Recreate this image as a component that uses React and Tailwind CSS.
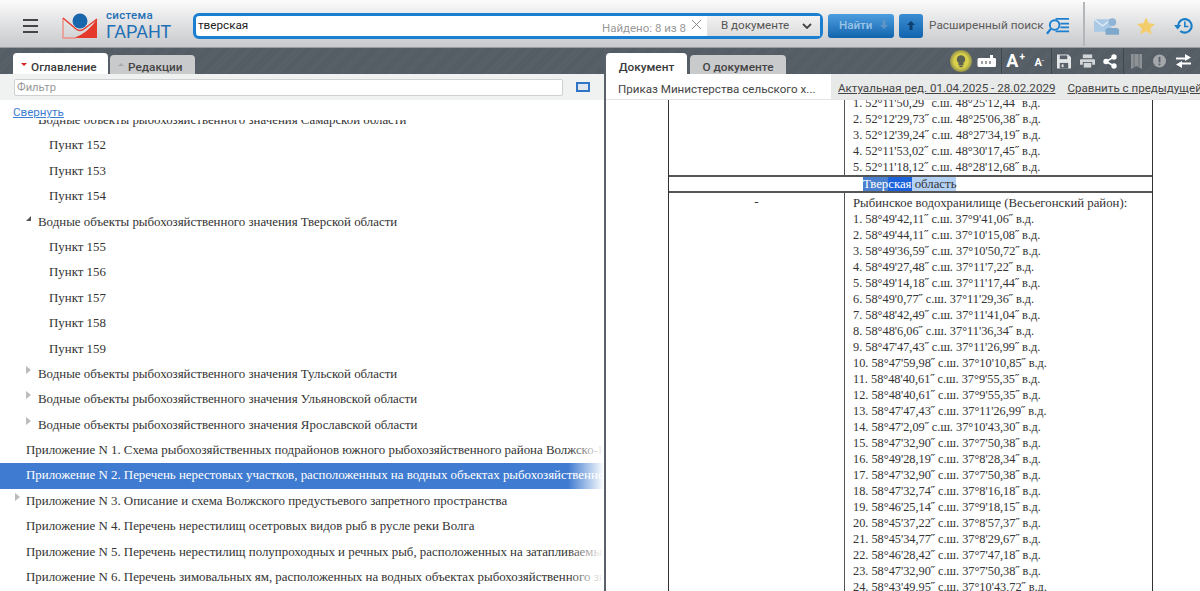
const sans = "font-['Roboto',sans-serif]"
const serif = "font-['Liberation_Serif',serif]"
const hatch = "bg-[#59626a] bg-[repeating-linear-gradient(135deg,#59626a_0px,#59626a_1px,#525a62_1px,#525a62_2px)]"

const treeRows = [
  { t: "Водные объекты рыбохозяйственного значения Самарской области", lvl: 1 },
  { t: "Пункт 152", lvl: 2 },
  { t: "Пункт 153", lvl: 2 },
  { t: "Пункт 154", lvl: 2 },
  { t: "Водные объекты рыбохозяйственного значения Тверской области", lvl: 1, arrow: "open" },
  { t: "Пункт 155", lvl: 2 },
  { t: "Пункт 156", lvl: 2 },
  { t: "Пункт 157", lvl: 2 },
  { t: "Пункт 158", lvl: 2 },
  { t: "Пункт 159", lvl: 2 },
  { t: "Водные объекты рыбохозяйственного значения Тульской области", lvl: 1, arrow: "closed" },
  { t: "Водные объекты рыбохозяйственного значения Ульяновской области", lvl: 1, arrow: "closed" },
  { t: "Водные объекты рыбохозяйственного значения Ярославской области", lvl: 1, arrow: "closed" },
  { t: "Приложение N 1. Схема рыбохозяйственных подрайонов южного рыбохозяйственного района Волжско-Каспийского бассейна", lvl: 0 },
  { t: "Приложение N 2. Перечень нерестовых участков, расположенных на водных объектах рыбохозяйственного значения", lvl: 0, active: true },
  { t: "Приложение N 3. Описание и схема Волжского предустьевого запретного пространства", lvl: 0, arrow: "closed" },
  { t: "Приложение N 4. Перечень нерестилищ осетровых видов рыб в русле реки Волга", lvl: 0 },
  { t: "Приложение N 5. Перечень нерестилищ полупроходных и речных рыб, расположенных на затапливаемых участках", lvl: 0 },
  { t: "Приложение N 6. Перечень зимовальных ям, расположенных на водных объектах рыбохозяйственного значения", lvl: 0 },
]

const coords1 = [
  "1. 52°11'50,29˝ с.ш. 48°25'12,44˝ в.д.",
  "2. 52°12'29,73˝ с.ш. 48°25'06,38˝ в.д.",
  "3. 52°12'39,24˝ с.ш. 48°27'34,19˝ в.д.",
  "4. 52°11'53,02˝ с.ш. 48°30'17,45˝ в.д.",
  "5. 52°11'18,12˝ с.ш. 48°28'12,68˝ в.д.",
]

const coords2 = [
  "1. 58°49'42,11˝ с.ш. 37°9'41,06˝ в.д.",
  "2. 58°49'44,11˝ с.ш. 37°10'15,08˝ в.д.",
  "3. 58°49'36,59˝ с.ш. 37°10'50,72˝ в.д.",
  "4. 58°49'27,48˝ с.ш. 37°11'7,22˝ в.д.",
  "5. 58°49'14,18˝ с.ш. 37°11'17,44˝ в.д.",
  "6. 58°49'0,77˝ с.ш. 37°11'29,36˝ в.д.",
  "7. 58°48'42,49˝ с.ш. 37°11'41,04˝ в.д.",
  "8. 58°48'6,06˝ с.ш. 37°11'36,34˝ в.д.",
  "9. 58°47'47,43˝ с.ш. 37°11'26,99˝ в.д.",
  "10. 58°47'59,98˝ с.ш. 37°10'10,85˝ в.д.",
  "11. 58°48'40,61˝ с.ш. 37°9'55,35˝ в.д.",
  "12. 58°48'40,61˝ с.ш. 37°9'55,35˝ в.д.",
  "13. 58°47'47,43˝ с.ш. 37°11'26,99˝ в.д.",
  "14. 58°47'2,09˝ с.ш. 37°10'43,30˝ в.д.",
  "15. 58°47'32,90˝ с.ш. 37°7'50,38˝ в.д.",
  "16. 58°49'28,19˝ с.ш. 37°8'28,34˝ в.д.",
  "17. 58°47'32,90˝ с.ш. 37°7'50,38˝ в.д.",
  "18. 58°47'32,74˝ с.ш. 37°8'16,18˝ в.д.",
  "19. 58°46'25,14˝ с.ш. 37°9'18,15˝ в.д.",
  "20. 58°45'37,22˝ с.ш. 37°8'57,37˝ в.д.",
  "21. 58°45'34,77˝ с.ш. 37°8'29,67˝ в.д.",
  "22. 58°46'28,42˝ с.ш. 37°7'47,18˝ в.д.",
  "23. 58°47'32,90˝ с.ш. 37°7'50,38˝ в.д.",
  "24. 58°43'49,95˝ с.ш. 37°10'43,72˝ в.д.",
]

const Logo = () => (
  <svg width="36" height="26" viewBox="0 0 36 26" className="shrink-0">
    <path d="M35 6 L35 25 L12 25 Q26 20 35 6 Z" fill="#e5392a" />
    <path d="M1 5 L1 25 L14 25" fill="none" stroke="#ee8d84" strokeWidth="1.400" />
    <path d="M1 5 L14 16 Q18 19 22 16 L35 6" fill="none" stroke="#e5392a" strokeWidth="1.400" />
    <circle cx="18" cy="8" r="7.500" fill="#1a66ad" />
  </svg>
)

const Tab = ({ label, active, marker, w }) => (
  <div className={`${active ? "bg-white h-[21px] text-[#3a3a3a]" : "bg-[#c9cacc] h-[19px] text-[#444]"} ${w} ${marker ? "justify-start pl-[8px]" : "justify-center"} rounded-t-[4px] flex items-start gap-[4px] text-[11.8px] font-medium overflow-hidden`}>
    {marker === "red" && <span className="w-0 h-0 border-x-[3px] border-x-transparent border-t-[3px] border-t-[#d81e1e] mt-[10px]" />}
    {marker === "gray" && <span className="w-0 h-0 border-x-[3px] border-x-transparent border-b-[3px] border-b-[#aaa] mt-[8px]" />}
    <span className={active ? "leading-[28px]" : "leading-[24px]"}>{label}</span>
  </div>
)

const TreeRow = ({ row }) => {
  const pad = row.lvl === 2 ? "pl-[49px]" : row.lvl === 1 ? "pl-[38px]" : "pl-[26px]"
  const arrowPos = row.lvl === 1 ? "left-[26px]" : "left-[15px]"
  return (
    <div className={`relative h-[25.4px] flex items-center whitespace-nowrap overflow-hidden ${pad} ${row.active ? "bg-[#3f7bd0] text-white" : "text-[#333]"}`}>
      {row.arrow === "open" && <span className={`absolute ${arrowPos} top-[6px] w-0 h-0 border-l-[5px] border-l-transparent border-b-[5px] border-b-[#555]`} />}
      {row.arrow === "closed" && <span className={`absolute ${arrowPos} top-[4px] w-0 h-0 border-y-[4px] border-y-transparent border-l-[5px] border-l-[#bbb]`} />}
      {row.t}
      {row.lvl === 0 && (
        <span className={`absolute right-0 top-0 bottom-0 w-[36px] bg-gradient-to-r ${row.active ? "from-[#3f7bd0]/0 to-white" : "from-white/0 to-white"}`} />
      )}
    </div>
  )
}

const Sep = () => <span className="w-px h-[26px] bg-[#3f474e]" />

const DocIcons = () => (
  <div className="flex items-center h-full text-white mr-[9px]">
    <span className="w-[22px] h-[22px] flex items-center justify-center rounded-full bg-[radial-gradient(circle,#d8d04a_45%,#6b6c4c_85%)] mr-[5px]">
      <svg width="10" height="14" viewBox="0 0 12 16">
        <path d="M6 1a5 5 0 0 0-3 9v3h6v-3a5 5 0 0 0-3-9z" fill="#5e6250" />
        <rect x="4" y="13.500" width="4" height="2" fill="#5e6250" />
      </svg>
    </span>
    <svg width="20" height="14" viewBox="0 0 20 14" className="mr-[4px]">
      <path d="M2 4h11V1h3v3h2a1.500 1.500 0 0 1 1 1.500v6a1.500 1.500 0 0 1-1 1.500H2a1.500 1.500 0 0 1-1.500-1.500v-6A1.500 1.500 0 0 1 2 4z" fill="#fff" />
      <path d="M5 7v3M9 7v3M13 7v3" stroke="#777" strokeWidth="1.400" />
    </svg>
    <Sep />
    <span className={`${sans} ml-[4px] text-[18px] font-bold leading-none`}>A</span>
    <span className="w-[6px] text-[10px] font-bold -mt-[8px] ml-[1px] mr-[9px] leading-none">+</span>
    <span className={`${sans} text-[11px] font-bold leading-none mt-[3px]`}>A</span>
    <span className="text-[8px] leading-none mr-[7px]">-</span>
    <Sep />
    <svg width="14" height="15" viewBox="0 0 15 15" className="ml-[5px] mr-[9px]">
      <path d="M0 0h12l3 3v12H0z" fill="#e4e6e8" />
      <rect x="3" y="1" width="8" height="4" fill="#59626a" />
      <rect x="3" y="9" width="9" height="6" fill="#59626a" />
      <rect x="5" y="10.500" width="2" height="3" fill="#e4e6e8" />
    </svg>
    <svg width="15" height="14" viewBox="0 0 16 14" className="mr-[8px]">
      <rect x="3" y="0" width="10" height="4" fill="#d3d6d8" />
      <path d="M1 5h14a1 1 0 0 1 1 1v5h-3V8H3v3H0V6a1 1 0 0 1 1-1z" fill="#d3d6d8" />
      <rect x="4" y="9" width="8" height="5" fill="#d3d6d8" />
    </svg>
    <svg width="14" height="15" viewBox="0 0 14 15" className="mr-[6px]">
      <path d="M11 3 L3 7.500 L11 12" stroke="#fff" strokeWidth="1.600" fill="none" />
      <circle cx="11" cy="3" r="2.700" fill="#fff" />
      <circle cx="3" cy="7.500" r="2.700" fill="#fff" />
      <circle cx="11" cy="12" r="2.700" fill="#fff" />
    </svg>
    <Sep />
    <svg width="11" height="15" viewBox="0 0 11 15" className="ml-[7px] mr-[11px]">
      <path d="M0 0h11v15L5.500 12 0 15z" fill="#8d9296" />
      <path d="M3 0v13M8 0v13" stroke="#6b7277" strokeWidth="1" />
    </svg>
    <svg width="13" height="14" viewBox="0 0 14 14" className="mr-[10px]">
      <circle cx="7" cy="7" r="7" fill="#a5a8ab" />
      <rect x="6" y="2.500" width="2" height="6" fill="#59626a" />
      <rect x="6" y="9.700" width="2" height="2" fill="#59626a" />
    </svg>
    <svg width="15" height="14" viewBox="0 0 15 14">
      <path d="M0 3.500h9V0l6 3.500L9 7V5.500H0zM15 8.500H6V7L0 10.500 6 14v-3.500h9z" fill="#fff" />
    </svg>
  </div>
)

const App = () => {
  return (
    <div className={`w-[1200px] h-[591px] overflow-hidden flex flex-col bg-white ${sans}`}>
      <header className="h-[48px] shrink-0 flex items-center pt-[4px] bg-gradient-to-b from-[#fbfbfb] to-[#c8c9cc] border-b border-[#9a9ca0]">
        <div className="ml-[23px] w-[15px] shrink-0 flex flex-col gap-[4px]">
          <span className="h-[2px] bg-[#444]" />
          <span className="h-[2px] bg-[#444]" />
          <span className="h-[2px] bg-[#444]" />
        </div>
        <div className="ml-[24px] shrink-0"><Logo /></div>
        <div className="ml-[8px] w-[66px] shrink-0 flex flex-col text-[#1f6fb5] leading-none whitespace-nowrap">
          <span className="text-[11.5px] font-medium tracking-[0.3px]">система</span>
          <span className="text-[18px] mt-[1px]">ГАРАНТ</span>
        </div>
        <div className="ml-[21px] w-[630px] shrink-0 h-[26px] border-[3px] border-[#1a7fd0] rounded-[6px] bg-white flex items-stretch">
          <span className="pl-[2px] text-[11.7px] text-[#222] flex-1 leading-[19px]">тверская</span>
          <span className="text-[11.5px] text-[#999] self-end leading-none mb-[1px] whitespace-nowrap">Найдено: 8 из 8</span>
          <svg width="11" height="11" viewBox="0 0 11 11" className="mx-[5px] mt-[3px] shrink-0">
            <path d="M1 1l9 9M10 1l-9 9" stroke="#8d8d8d" strokeWidth="1" />
          </svg>
          <div className="w-[113px] shrink-0 bg-gradient-to-b from-[#f2f2f2] to-[#dcdcdc] flex items-center text-[11.6px] text-[#555]">
            <span className="ml-[14px] flex-1 whitespace-nowrap">В документе</span>
            <svg width="10" height="6" viewBox="0 0 10 6" className="mr-[8px]">
              <path d="M1 1l4 4 4-4" stroke="#444" strokeWidth="1.800" fill="none" />
            </svg>
          </div>
        </div>
        <div className="ml-[5px] w-[66px] shrink-0 h-[24px] rounded-[3px] bg-gradient-to-b from-[#4c9ee0] to-[#0f64ad] flex items-center text-[11.6px] font-medium text-[#9cc4e6]">
          <span className="ml-[11px] flex-1">Найти</span>
          <svg width="8" height="9" viewBox="0 0 8 9" className="mr-[6px] mb-[2px]"><path d="M2.500 0h3v5H8L4 9 0 5h2.500z" fill="#5f95c6" /></svg>
        </div>
        <div className="ml-[5px] w-[24px] shrink-0 h-[24px] rounded-[3px] bg-gradient-to-b from-[#3a8dd3] to-[#0f64ad] flex items-center justify-center">
          <svg width="8" height="9" viewBox="0 0 8 9"><path d="M2.500 9h3V4H8L4 0 0 4h2.500z" fill="#0c3e6e" /></svg>
        </div>
        <span className="ml-[6px] w-[113px] shrink-0 text-[11.8px] text-[#5c5c5c] whitespace-nowrap">Расширенный поиск</span>
        <svg width="24" height="18" viewBox="0 0 25 18" className="ml-[4px] shrink-0">
          <circle cx="9" cy="8" r="5" fill="none" stroke="#1a7fd0" strokeWidth="2" />
          <path d="M5 12l-4 5" stroke="#1a7fd0" strokeWidth="2.400" />
          <path d="M10 2h14M15 7h9M15 11h9M10 15h14" stroke="#1a7fd0" strokeWidth="1.800" transform="translate(0 -0.500)" />
        </svg>
        <span className="ml-[13px] w-[2px] shrink-0 h-[44px] -mt-[4px] bg-[#b4b6b9]" />
        <svg width="26" height="18" viewBox="0 0 27 18" className="ml-[9px] shrink-0">
          <rect x="0" y="2" width="18" height="13" fill="#a9c9e6" />
          <path d="M0 2l9 7 9-7" stroke="#e8eef4" strokeWidth="1.200" fill="none" />
          <circle cx="19" cy="5" r="4" fill="#8fb4d6" />
          <path d="M12 18v-3a3 3 0 0 1 3-4h8a3 3 0 0 1 3 4v3z" fill="#7ea8cc" />
        </svg>
        <svg width="18" height="18" viewBox="0 0 20 19" className="ml-[17px] shrink-0">
          <path d="M10 0l3 6.500 7 .8-5.200 4.700L16.300 19 10 15.400 3.700 19l1.500-7L0 7.300l7-.8z" fill="#f3cc6b" />
        </svg>
        <svg width="19" height="18" viewBox="0 0 21 20" className="ml-[19px] shrink-0">
          <path d="M4.500 10a7.500 7.500 0 1 1 2.500 5.500" fill="none" stroke="#1a7fc8" strokeWidth="2.400" />
          <path d="M0 9h8l-4 5z" fill="#1a7fc8" />
          <path d="M12 5v5.500h4" fill="none" stroke="#1a7fc8" strokeWidth="1.800" />
        </svg>
      </header>

      <div className="flex-1 flex min-h-0">
        <section className="w-[604px] shrink-0 flex flex-col min-h-0">
          <div className={`h-[26px] shrink-0 ${hatch} flex items-end pl-[13px] gap-[2px]`}>
            <Tab label="Оглавление" active marker="red" w="w-[95px]" />
            <Tab label="Редакции" marker="gray" w="w-[85px]" />
          </div>
          <div className="h-[26px] shrink-0 bg-[#f0f1f1] flex items-center pl-[14px]">
            <div className="w-[549px] h-[17px] border border-[#cfd0d2] rounded-[2px] bg-white pl-[2px] text-[11.2px] leading-[15px] text-[#999]">Фильтр</div>
            <span className="ml-[13px] w-[14px] h-[10px] border-2 border-[#2f74c7] bg-[#dfe6ee]" />
          </div>
          <div className="h-[20px] shrink-0 pl-[13px] text-[11.6px] leading-[25px] text-[#3e7ed0] underline overflow-hidden">Свернуть</div>
          <div className={`flex-1 min-h-0 overflow-hidden text-[12.9px] ${serif}`}>
            <div className="-mt-[12px]">
              {treeRows.map(row => <TreeRow key={row.t} row={row} />)}
            </div>
          </div>
        </section>

        <section className="flex-1 min-w-0 border-l-2 border-[#5b6168] flex flex-col min-h-0">
          <div className={`h-[26px] shrink-0 ${hatch} flex justify-between`}>
            <div className="flex items-end gap-[3px]">
              <Tab label="Документ" active w="w-[81px]" />
              <Tab label="О документе" w="w-[96px]" />
            </div>
            <DocIcons />
          </div>
          <div className="h-[26px] shrink-0 flex text-[11.6px] text-[#444] whitespace-nowrap overflow-hidden border-b border-[#e4e4e4]">
            <span className="w-[225px] pl-[12px] shrink-0 leading-[30px]">Приказ Министерства сельского х...</span>
            <div className="flex-1 h-full bg-[#e8e9e9] flex pl-[7px] gap-[12px] leading-[29px]">
              <span className="underline">Актуальная ред. 01.04.2025 - 28.02.2029</span>
              <span className="underline">Сравнить с предыдущей</span>
            </div>
          </div>
          <div className={`flex-1 min-h-0 overflow-hidden pl-[62px] text-[12.8px] text-[#333] ${serif}`}>
            <div className="w-[485px] border-x border-[#333]">
              <div className="flex h-[75px]">
                <div className="w-[176px] border-r border-[#555]" />
                <div className="pl-[8px] text-[12.3px] leading-[16px] -mt-[5px]">
                  {coords1.map(c => <div key={c}>{c}</div>)}
                </div>
              </div>
              <div className="h-[18px] border-y-2 border-[#555] pl-[194px] leading-[15px]">
                <span className="bg-[#4a80cf] text-white">Твер</span>
                <span className="bg-[#1a62dc] text-white">ская</span>
                <span className="bg-[#b3d1f5]"> область</span>
              </div>
              <div className="flex">
                <div className="w-[176px] border-r border-[#555] text-center leading-[18px]">-</div>
                <div className="pl-[8px] leading-[16px] pt-[2px] whitespace-nowrap">
                  <div>Рыбинское водохранилище (Весьегонский район):</div>
                  <div className="text-[12.3px]">
                    {coords2.map(c => <div key={c}>{c}</div>)}
                  </div>
                </div>
              </div>
            </div>
          </div>
        </section>
      </div>
    </div>
  )
}

export default App
